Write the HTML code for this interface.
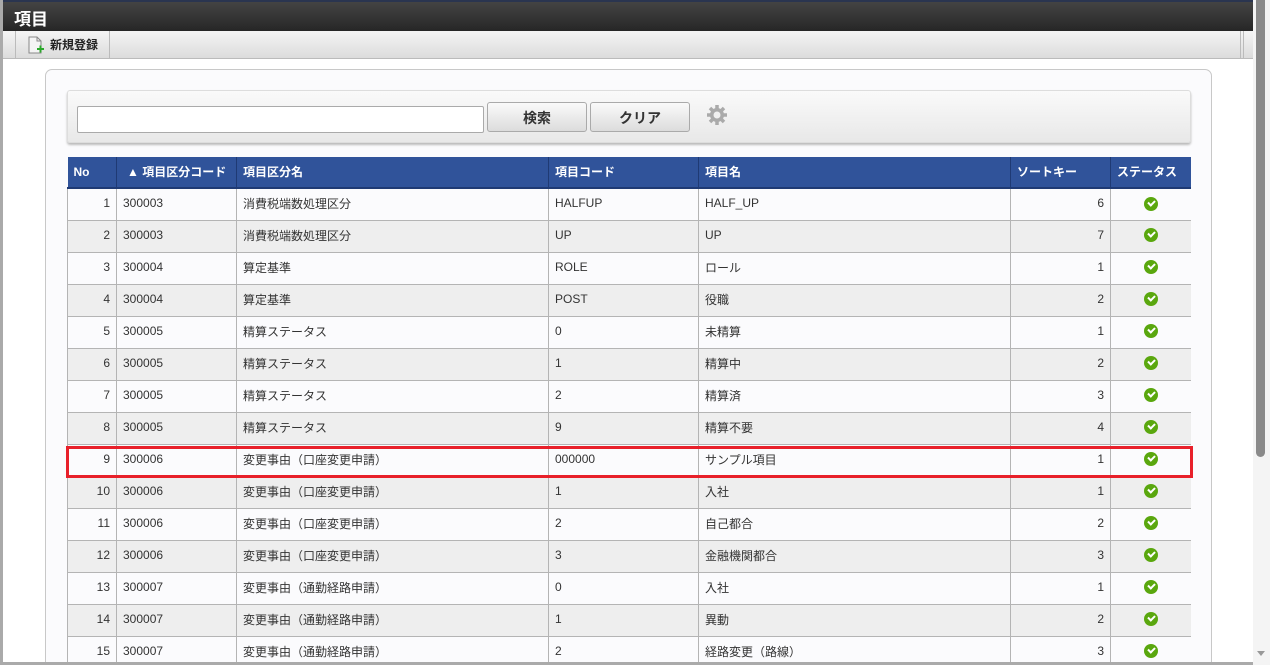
<!DOCTYPE html>
<html style="width:1270px;height:665px;overflow:hidden"><head><meta charset="utf-8">
<style>
*{box-sizing:border-box;margin:0;padding:0}
body{width:1270px;height:665px;overflow:hidden;background:#fff;font-family:"Liberation Sans","Noto Sans CJK JP",sans-serif;font-size:12px;color:#333;position:relative}
.leftb{position:absolute;left:0;top:0;width:3px;height:665px;background:#aaa}
.botb{position:absolute;left:0;top:662px;width:1253px;height:3px;background:#aaa}
.title{position:absolute;left:3px;top:0;width:1250px;height:31px;background:linear-gradient(#444,#262626);border-top:2px solid #2a3550;color:#fff;font-weight:bold;font-size:17px;padding:3px 0 0 11px}
.tool{position:absolute;left:3px;top:31px;width:1250px;height:28px;background:linear-gradient(#f4f4f4,#dcdcdc);border-bottom:1px solid #bbb}
.tool .btn{position:absolute;left:12px;top:0;width:95px;height:27px;border-left:1px solid #bbb;border-right:1px solid #bbb;font-weight:bold;font-size:12px;padding:5px 0 0 34px;color:#222}
.tool .r{position:absolute;left:1237px;top:0;width:4px;height:27px;border-left:1px solid #bbb;border-right:1px solid #bbb}
.sb{position:absolute;left:1253px;top:0;width:17px;height:665px;background:#f4f4f4}
.sb .th{position:absolute;left:3px;top:0;width:9px;height:457px;background:#8a8a8a;border-radius:0 0 5px 5px}
.sb .ar{position:absolute;left:4px;top:651px;border-left:4px solid transparent;border-right:4px solid transparent;border-top:5px solid #999}
.panel{position:absolute;left:45px;top:69px;width:1167px;height:600px;border:1px solid #c8c8c8;border-radius:7px;background:#fbfbfd}
.search{position:absolute;left:67px;top:90px;width:1124px;height:53px;border:1px solid #ddd;border-radius:3px;background:linear-gradient(#fafafa,#e8e8e8);box-shadow:0 2px 2px #bbb}
.inp{position:absolute;left:77px;top:106px;width:407px;height:27px;border:1px solid #aaa;border-radius:2px;background:#fff}
.b{position:absolute;top:102px;width:100px;height:30px;border:1px solid #aaa;border-radius:3px;background:linear-gradient(#fafafa,#dcdcdc);text-align:center;font-weight:bold;font-size:14px;padding-top:5px;color:#333}
.tw{position:absolute;left:67px;top:157px;width:1124px;height:505px;overflow:hidden}
table{border-collapse:collapse;width:1124px;table-layout:fixed}
th{background:#30539a;color:#fff;font-weight:bold;text-align:left;height:31px;padding:0 6px 1px;border-right:1px solid #1f3a74;border-bottom:2px solid #1f3a74;font-size:12px}
td{height:32px;border:1px solid #b4b4b4;padding:0 6px 2px;font-size:12px;white-space:nowrap}
tr.g td{background:#eee}
td.n{text-align:right}
td.c{text-align:center}
.ok{display:inline-block;width:14px;height:14px;border-radius:50%;background:#5aa70e;vertical-align:middle;position:relative}
.ok:after{content:"";position:absolute;left:4px;top:3px;width:5px;height:3px;border-left:2px solid #fff;border-bottom:2px solid #fff;transform:rotate(-45deg)}
.hl{position:absolute;left:66px;top:446px;width:1127px;height:32px;border:3px solid #e8202a}
</style></head><body>
<div class="title">項目</div>
<div class="tool"><div class="btn"><svg style="position:absolute;left:12px;top:5px" width="16" height="18" viewBox="0 0 16 18"><path d="M1 1h8l4 4v12H1z" fill="#f4f4f4" stroke="#888"/><path d="M9 1v4h4" fill="none" stroke="#888"/><rect x="9" y="12" width="7" height="2" fill="#2ba82b"/><rect x="11.5" y="9.5" width="2" height="7" fill="#2ba82b"/></svg>新規登録</div><div class="r"></div></div>
<div class="leftb"></div>
<div class="sb"><div class="th"></div><div class="ar"></div></div>
<div class="panel"></div>
<div class="search"></div>
<div class="inp"></div>
<div class="b" style="left:487px">検索</div>
<div class="b" style="left:590px">クリア</div>
<svg style="position:absolute;left:706px;top:104px" width="22" height="22" viewBox="0 0 22 22"><g fill="#aaa"><circle cx="11" cy="11" r="7"/><g stroke="#aaa" stroke-width="3.5"><path d="M11 1v20M1 11h20M4 4l14 14M18 4L4 18"/></g></g><circle cx="11" cy="11" r="3.5" fill="#f0f0f0"/></svg>
<div class="tw"><table>
<colgroup><col style="width:49px"><col style="width:120px"><col style="width:312px"><col style="width:150px"><col style="width:312px"><col style="width:100px"><col style="width:81px"></colgroup>
<tr><th>No</th><th style="padding-left:10px">▲ 項目区分コード</th><th>項目区分名</th><th>項目コード</th><th>項目名</th><th>ソートキー</th><th>ステータス</th></tr>
<tr><td class="n">1</td><td>300003</td><td>消費税端数処理区分</td><td>HALFUP</td><td>HALF_UP</td><td class="n">6</td><td class="c"><span class="ok"></span></td></tr>
<tr class="g"><td class="n">2</td><td>300003</td><td>消費税端数処理区分</td><td>UP</td><td>UP</td><td class="n">7</td><td class="c"><span class="ok"></span></td></tr>
<tr><td class="n">3</td><td>300004</td><td>算定基準</td><td>ROLE</td><td>ロール</td><td class="n">1</td><td class="c"><span class="ok"></span></td></tr>
<tr class="g"><td class="n">4</td><td>300004</td><td>算定基準</td><td>POST</td><td>役職</td><td class="n">2</td><td class="c"><span class="ok"></span></td></tr>
<tr><td class="n">5</td><td>300005</td><td>精算ステータス</td><td>0</td><td>未精算</td><td class="n">1</td><td class="c"><span class="ok"></span></td></tr>
<tr class="g"><td class="n">6</td><td>300005</td><td>精算ステータス</td><td>1</td><td>精算中</td><td class="n">2</td><td class="c"><span class="ok"></span></td></tr>
<tr><td class="n">7</td><td>300005</td><td>精算ステータス</td><td>2</td><td>精算済</td><td class="n">3</td><td class="c"><span class="ok"></span></td></tr>
<tr class="g"><td class="n">8</td><td>300005</td><td>精算ステータス</td><td>9</td><td>精算不要</td><td class="n">4</td><td class="c"><span class="ok"></span></td></tr>
<tr><td class="n">9</td><td>300006</td><td>変更事由（口座変更申請）</td><td>000000</td><td>サンプル項目</td><td class="n">1</td><td class="c"><span class="ok"></span></td></tr>
<tr class="g"><td class="n">10</td><td>300006</td><td>変更事由（口座変更申請）</td><td>1</td><td>入社</td><td class="n">1</td><td class="c"><span class="ok"></span></td></tr>
<tr><td class="n">11</td><td>300006</td><td>変更事由（口座変更申請）</td><td>2</td><td>自己都合</td><td class="n">2</td><td class="c"><span class="ok"></span></td></tr>
<tr class="g"><td class="n">12</td><td>300006</td><td>変更事由（口座変更申請）</td><td>3</td><td>金融機関都合</td><td class="n">3</td><td class="c"><span class="ok"></span></td></tr>
<tr><td class="n">13</td><td>300007</td><td>変更事由（通勤経路申請）</td><td>0</td><td>入社</td><td class="n">1</td><td class="c"><span class="ok"></span></td></tr>
<tr class="g"><td class="n">14</td><td>300007</td><td>変更事由（通勤経路申請）</td><td>1</td><td>異動</td><td class="n">2</td><td class="c"><span class="ok"></span></td></tr>
<tr><td class="n">15</td><td>300007</td><td>変更事由（通勤経路申請）</td><td>2</td><td>経路変更（路線）</td><td class="n">3</td><td class="c"><span class="ok"></span></td></tr>
</table></div>
<div class="hl"></div>
<div class="botb"></div>
</body></html>
